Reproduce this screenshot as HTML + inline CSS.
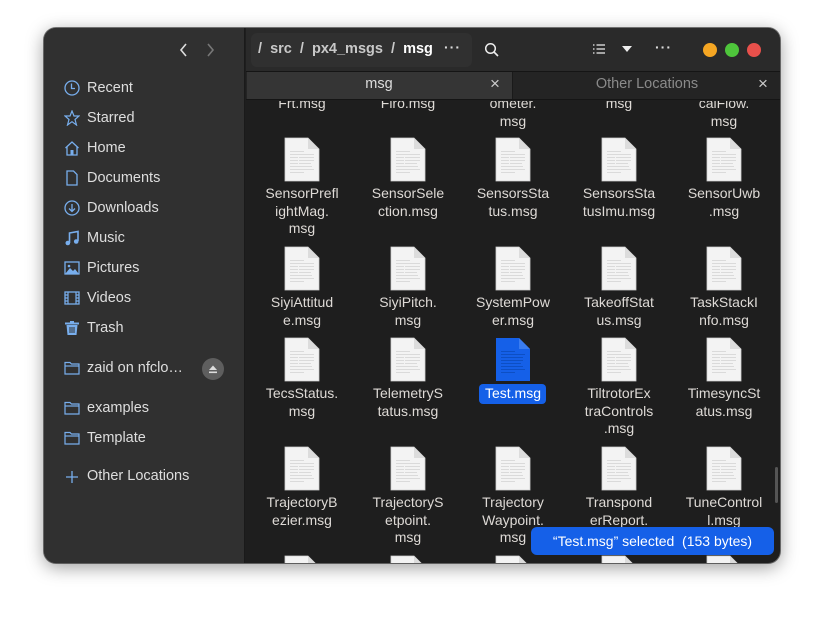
<!DOCTYPE html>
<html><head><meta charset="utf-8"><style>
*{margin:0;padding:0;box-sizing:border-box}
body{width:824px;height:623px;background:#fff;font-family:"Liberation Sans",sans-serif;position:relative;overflow:hidden}
.win{position:absolute;left:44px;top:28px;width:736px;height:535px;border-radius:12px;overflow:hidden;background:#1e1e1e;box-shadow:0 4px 18px rgba(0,0,0,.4),0 0 0 1px rgba(0,0,0,.5)}
.side{position:absolute;left:0;top:0;width:201px;height:535px;background:#303030;border-right:1px solid #1a1a1a}
.hdr{position:absolute;left:202px;top:0;right:0;height:44px;background:#2a2a2a;border-bottom:1px solid #151515}
.tabs{position:absolute;left:202px;top:44px;right:0;height:28px;background:#242424;border-bottom:1px solid #151515}
.a{position:absolute;white-space:nowrap}
.si{position:absolute;left:43px;color:#dedede;font-size:14.5px;line-height:18px}
.ic{position:absolute;left:20px}
.lbl{position:absolute;width:100px;text-align:center;color:#dedad6;font-size:14px;line-height:17.5px}
.f{position:absolute;width:36px;height:45px}
</style></head><body>
<svg width="0" height="0" style="position:absolute"><defs>
<g id="doc"><path d="M1 1H24L35 12V44H1Z" fill="#f3f3f3" stroke="#d0d0d0" stroke-width=".8"/><path d="M24 1V12H35Z" fill="#dcdcdc"/>
<g fill="#dadada"><rect x="6" y="14" width="14" height="1"/><rect x="6" y="17" width="24" height="1"/><rect x="6" y="20" width="8" height="1"/><rect x="15" y="20" width="15" height="1"/><rect x="6" y="23" width="8" height="1"/><rect x="15" y="23" width="15" height="1"/><rect x="6" y="26" width="8" height="1"/><rect x="15" y="26" width="12" height="1"/><rect x="6" y="29" width="22" height="1"/><rect x="6" y="32" width="24" height="1"/><rect x="6" y="35" width="14" height="1"/></g></g>
<g id="sdoc"><path d="M1 1H24L35 12V44H1Z" fill="#1560e8"/><path d="M24 1V12H35Z" fill="#3a7cf0"/>
<g fill="#0d4fc4"><rect x="6" y="14" width="14" height="1"/><rect x="6" y="17" width="24" height="1"/><rect x="6" y="20" width="22" height="1"/><rect x="6" y="23" width="22" height="1"/><rect x="6" y="26" width="20" height="1"/><rect x="6" y="29" width="22" height="1"/><rect x="6" y="32" width="24" height="1"/><rect x="6" y="35" width="14" height="1"/></g></g>
</defs></svg>
<div class="win">
<div class="side">
<svg class="a" style="left:134px;top:14px" width="12" height="16"><path d="M8 2L3 8L8 14" stroke="#ddd" stroke-width="1.6" fill="none"/></svg>
<svg class="a" style="left:160px;top:14px" width="12" height="16"><path d="M4 2L9 8L4 14" stroke="#777" stroke-width="1.6" fill="none"/></svg>
<svg class="ic" style="top:52px" width="16" height="16"><circle cx="8" cy="8" r="7" stroke="#78aeed" stroke-width="1.3" fill="none"/><path d="M7.5 3.5V8.5H11" stroke="#78aeed" stroke-width="1.3" fill="none"/></svg><div class="si" style="top:51px">Recent</div>
<svg class="ic" style="top:82px" width="16" height="16"><path d="M8 1L10 6H15L11 9.5L12.5 15L8 11.7L3.5 15L5 9.5L1 6H6Z" stroke="#78aeed" stroke-width="1.2" fill="none"/></svg><div class="si" style="top:81px">Starred</div>
<svg class="ic" style="top:112px" width="16" height="16"><path d="M1.5 8L8 2L14.5 8M3 7V15H13V7" stroke="#78aeed" stroke-width="1.3" fill="none"/><rect x="6.5" y="10" width="3" height="5" fill="#78aeed"/></svg><div class="si" style="top:111px">Home</div>
<svg class="ic" style="top:142px" width="16" height="16"><path d="M3 1H9.5L13 4.5V15H3Z" stroke="#78aeed" stroke-width="1.3" fill="none"/></svg><div class="si" style="top:141px">Documents</div>
<svg class="ic" style="top:172px" width="16" height="16"><circle cx="8" cy="8" r="7" stroke="#78aeed" stroke-width="1.3" fill="none"/><path d="M8 4V11M5 8.5L8 11.5L11 8.5" stroke="#78aeed" stroke-width="1.3" fill="none"/></svg><div class="si" style="top:171px">Downloads</div>
<svg class="ic" style="top:202px" width="16" height="16"><path d="M5.5 13V3L14 1.5V11" stroke="#78aeed" stroke-width="1.6" fill="none"/><circle cx="3.8" cy="13" r="2.3" fill="#78aeed"/><circle cx="12.2" cy="11.5" r="2.3" fill="#78aeed"/></svg><div class="si" style="top:201px">Music</div>
<svg class="ic" style="top:232px" width="16" height="16"><rect x="1" y="2" width="14" height="12" stroke="#78aeed" stroke-width="1.3" fill="none"/><path d="M1.5 13.5L6 8L9 11L11 9L14.5 13.5Z" fill="#78aeed"/><circle cx="5" cy="6" r="1.3" fill="#78aeed"/></svg><div class="si" style="top:231px">Pictures</div>
<svg class="ic" style="top:262px" width="16" height="16"><rect x="1" y="2" width="14" height="12" stroke="#78aeed" stroke-width="1.3" fill="none"/><path d="M4 2V14M12 2V14M1 5H4M1 8H4M1 11H4M12 5H15M12 8H15M12 11H15" stroke="#78aeed" stroke-width="1.2"/></svg><div class="si" style="top:261px">Videos</div>
<svg class="ic" style="top:292px" width="16" height="16"><rect x="1" y="2.5" width="14" height="2" fill="#78aeed"/><rect x="6" y="1" width="4" height="2" fill="#78aeed"/><path d="M2.5 5H13.5L12.5 15H3.5Z" fill="#78aeed"/><path d="M6 7V13M8 7V13M10 7V13" stroke="#303030" stroke-width="1"/></svg><div class="si" style="top:291px">Trash</div>
<svg class="ic" style="top:332px" width="16" height="16"><path d="M1 2.5H6L7.5 4H15V14H1Z" stroke="#78aeed" stroke-width="1.2" fill="none"/><path d="M1 6H15" stroke="#78aeed" stroke-width="1.2"/></svg><div class="si" style="top:331px">zaid on nfclo…</div>
<div class="a" style="left:158px;top:330px;width:22px;height:22px;border-radius:50%;background:#5e5e5e"></div>
<svg class="a" style="left:162px;top:334px" width="14" height="14"><path d="M3 8L7 3.5L11 8Z" fill="#ddd"/><rect x="3" y="9.5" width="8" height="1.6" fill="#ddd"/></svg>
<svg class="ic" style="top:372px" width="16" height="16"><path d="M1 2.5H6L7.5 4H15V14H1Z" stroke="#78aeed" stroke-width="1.2" fill="none"/><path d="M1 6H15" stroke="#78aeed" stroke-width="1.2"/></svg><div class="si" style="top:371px">examples</div>
<svg class="ic" style="top:402px" width="16" height="16"><path d="M1 2.5H6L7.5 4H15V14H1Z" stroke="#78aeed" stroke-width="1.2" fill="none"/><path d="M1 6H15" stroke="#78aeed" stroke-width="1.2"/></svg><div class="si" style="top:401px">Template</div>
<svg class="ic" style="top:441px" width="16" height="16"><path d="M8 2V14M2 8H14" stroke="#78aeed" stroke-width="1.3"/></svg><div class="si" style="top:439px">Other Locations</div>
</div>
<div class="hdr">
<div class="a" style="left:5px;top:5px;width:221px;height:34px;border-radius:6px;background:#303030"></div>
<div class="a" style="left:12px;top:13px;font-size:14.5px;color:#c8c8c8;font-weight:bold">/&nbsp;&nbsp;src&nbsp;&nbsp;/&nbsp;&nbsp;px4_msgs&nbsp;&nbsp;/&nbsp;&nbsp;<span style="color:#fff">msg</span></div>
<div class="a" style="left:198px;top:11px;color:#ddd;font-size:14px;font-weight:bold;letter-spacing:1px">···</div>
<svg class="a" style="left:238px;top:14px" width="16" height="16"><circle cx="6.5" cy="6.5" r="4.8" stroke="#eee" stroke-width="1.5" fill="none"/><path d="M10 10L14 14" stroke="#eee" stroke-width="1.6"/></svg>
<svg class="a" style="left:346px;top:15px" width="14" height="14"><path d="M1 2H2.5M4.5 2H13M1 6H2.5M4.5 6H13M1 10H2.5M4.5 10H13" stroke="#eee" stroke-width="1.3"/></svg>
<svg class="a" style="left:375px;top:17px" width="12" height="8"><path d="M1 1H11L6 7Z" fill="#eee"/></svg>
<div class="a" style="left:409px;top:11px;color:#ddd;font-size:14px;font-weight:bold;letter-spacing:1px">···</div>
<div class="a" style="left:457px;top:15px;width:14px;height:14px;border-radius:50%;background:#f5a623"></div>
<div class="a" style="left:479px;top:15px;width:14px;height:14px;border-radius:50%;background:#4ec53b"></div>
<div class="a" style="left:501px;top:15px;width:14px;height:14px;border-radius:50%;background:#e8504b"></div>
</div>
<div class="tabs">
<div class="a" style="left:1px;top:0;width:266px;height:27px;background:#353535;border-right:1px solid #1a1a1a"></div>
<div class="a" style="left:0;width:266px;top:4px;text-align:center;color:#ddd;font-size:14.5px">msg</div>
<div class="a" style="left:244px;top:2px;color:#ccc;font-size:17px">×</div>
<div class="a" style="left:268px;width:266px;top:4px;text-align:center;color:#8a8a8a;font-size:14.5px">Other Locations</div>
<div class="a" style="left:512px;top:2px;color:#ccc;font-size:17px">×</div>
</div>
<div class="a" style="left:202px;top:73px;right:0;bottom:0;overflow:hidden">
<div class="lbl" style="left:6px;top:-6px">Frt.msg</div>
<div class="lbl" style="left:112px;top:-6px">Firo.msg</div>
<div class="lbl" style="left:217px;top:-6px">ometer.<br>msg</div>
<div class="lbl" style="left:323px;top:-6px">msg</div>
<div class="lbl" style="left:428px;top:-6px">calFlow.<br>msg</div>

<svg class="f" style="left:38px;top:36px"><use href="#doc"/></svg>
<svg class="f" style="left:144px;top:36px"><use href="#doc"/></svg>
<svg class="f" style="left:249px;top:36px"><use href="#doc"/></svg>
<svg class="f" style="left:355px;top:36px"><use href="#doc"/></svg>
<svg class="f" style="left:460px;top:36px"><use href="#doc"/></svg>
<div class="lbl" style="left:6px;top:84px">SensorPrefl<br>ightMag.<br>msg</div>
<div class="lbl" style="left:112px;top:84px">SensorSele<br>ction.msg</div>
<div class="lbl" style="left:217px;top:84px">SensorsSta<br>tus.msg</div>
<div class="lbl" style="left:323px;top:84px">SensorsSta<br>tusImu.msg</div>
<div class="lbl" style="left:428px;top:84px">SensorUwb<br>.msg</div>

<svg class="f" style="left:38px;top:145px"><use href="#doc"/></svg>
<svg class="f" style="left:144px;top:145px"><use href="#doc"/></svg>
<svg class="f" style="left:249px;top:145px"><use href="#doc"/></svg>
<svg class="f" style="left:355px;top:145px"><use href="#doc"/></svg>
<svg class="f" style="left:460px;top:145px"><use href="#doc"/></svg>
<div class="lbl" style="left:6px;top:193px">SiyiAttitud<br>e.msg</div>
<div class="lbl" style="left:112px;top:193px">SiyiPitch.<br>msg</div>
<div class="lbl" style="left:217px;top:193px">SystemPow<br>er.msg</div>
<div class="lbl" style="left:323px;top:193px">TakeoffStat<br>us.msg</div>
<div class="lbl" style="left:428px;top:193px">TaskStackI<br>nfo.msg</div>

<svg class="f" style="left:38px;top:236px"><use href="#doc"/></svg>
<svg class="f" style="left:144px;top:236px"><use href="#doc"/></svg>
<svg class="f" style="left:249px;top:236px"><use href="#sdoc"/></svg>
<svg class="f" style="left:355px;top:236px"><use href="#doc"/></svg>
<svg class="f" style="left:460px;top:236px"><use href="#doc"/></svg>
<div class="lbl" style="left:6px;top:284px">TecsStatus.<br>msg</div>
<div class="lbl" style="left:112px;top:284px">TelemetryS<br>tatus.msg</div>
<div class="a" style="left:233px;top:283px;width:67px;height:20px;border-radius:4px;background:#1560e8"></div>
<div class="lbl" style="left:217px;top:284px;color:#fff">Test.msg</div>
<div class="lbl" style="left:323px;top:284px">TiltrotorEx<br>traControls<br>.msg</div>
<div class="lbl" style="left:428px;top:284px">TimesyncSt<br>atus.msg</div>

<svg class="f" style="left:38px;top:345px"><use href="#doc"/></svg>
<svg class="f" style="left:144px;top:345px"><use href="#doc"/></svg>
<svg class="f" style="left:249px;top:345px"><use href="#doc"/></svg>
<svg class="f" style="left:355px;top:345px"><use href="#doc"/></svg>
<svg class="f" style="left:460px;top:345px"><use href="#doc"/></svg>
<div class="lbl" style="left:6px;top:393px">TrajectoryB<br>ezier.msg</div>
<div class="lbl" style="left:112px;top:393px">TrajectoryS<br>etpoint.<br>msg</div>
<div class="lbl" style="left:217px;top:393px">Trajectory<br>Waypoint.<br>msg</div>
<div class="lbl" style="left:323px;top:393px">Transpond<br>erReport.</div>
<div class="lbl" style="left:428px;top:393px">TuneControl<br>l.msg</div>

<svg class="f" style="left:38px;top:454px"><use href="#doc"/></svg>
<svg class="f" style="left:144px;top:454px"><use href="#doc"/></svg>
<svg class="f" style="left:249px;top:454px"><use href="#doc"/></svg>
<svg class="f" style="left:355px;top:454px"><use href="#doc"/></svg>
<svg class="f" style="left:460px;top:454px"><use href="#doc"/></svg>
<div class="a" style="left:529px;top:366px;width:3px;height:36px;border-radius:2px;background:#555"></div>
</div>
<div class="a" style="left:487px;top:499px;width:243px;height:28px;border-radius:6px;background:#1560e8;color:#fff;font-size:14px;line-height:28px;text-align:center">“Test.msg” selected&nbsp; (153 bytes)</div>
</div>
</body></html>
